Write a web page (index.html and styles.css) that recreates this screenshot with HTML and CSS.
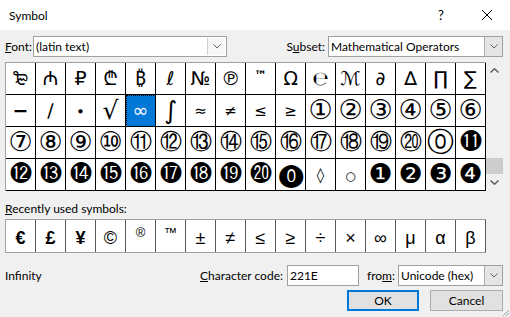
FILE: index.html
```html
<!DOCTYPE html>
<html>

<head>
  <meta charset="utf-8">
  <title>Symbol</title>
  <link rel="stylesheet" href="styles.css">
</head>

<body>
  <div class="titlebar">
    <span class="title">Symbol</span>
    <span class="title-btn help">?</span>
    <span class="title-btn close">
      <svg width="10" height="10" viewBox="0 0 10 10"><path d="M0 0L10 10M10 0L0 10" stroke="#000" stroke-width="1"/></svg>
    </span>
  </div>

  <div class="dialog">
    <div class="font-row">
      <span class="font-label"><u>F</u>ont:</span>
      <div class="combo font-combo">
        <span class="combo-text">(latin text)</span>
        <span class="combo-btn">
          <svg width="8" height="5" viewBox="0 0 8 5"><path d="M0.5 0.5L4 4L7.5 0.5" fill="none" stroke="#606060"/></svg>
        </span>
      </div>
      <span class="subset-label">S<u>u</u>bset:</span>
      <div class="combo subset-combo">
        <span class="combo-text">Mathematical Operators</span>
        <span class="combo-btn dark">
          <svg width="8" height="5" viewBox="0 0 8 5"><path d="M0.5 0.5L4 4L7.5 0.5" fill="none" stroke="#606060"/></svg>
        </span>
      </div>
    </div>

    <div class="chart">
      <div class="grid">
        <span class="cell">&#x20BB;</span>
        <span class="cell">&#x20BC;</span>
        <span class="cell">&#x20BD;</span>
        <span class="cell">&#x20BE;</span>
        <span class="cell">&#x20BF;</span>
        <span class="cell">&#x2113;</span>
        <span class="cell">&#x2116;</span>
        <span class="cell">&#x2117;</span>
        <span class="cell tm">&#x2122;</span>
        <span class="cell">&#x2126;</span>
        <span class="cell">&#x212E;</span>
        <span class="cell">&#x2133;</span>
        <span class="cell">&#x2202;</span>
        <span class="cell">&#x2206;</span>
        <span class="cell">&#x220F;</span>
        <span class="cell">&#x2211;</span>

        <span class="cell bold">&#x2212;</span>
        <span class="cell">&#x2215;</span>
        <span class="cell small">&#x2219;</span>
        <span class="cell big">&#x221A;</span>
        <span class="cell selected">&#x221E;</span>
        <span class="cell big">&#x222B;</span>
        <span class="cell small">&#x2248;</span>
        <span class="cell small">&#x2260;</span>
        <span class="cell small">&#x2264;</span>
        <span class="cell small">&#x2265;</span>
        <span class="cell circ-one">&#x2460;</span>
        <span class="cell circ-one">&#x2461;</span>
        <span class="cell circ-one">&#x2462;</span>
        <span class="cell circ-one">&#x2463;</span>
        <span class="cell circ-one">&#x2464;</span>
        <span class="cell circ-one">&#x2465;</span>

        <span class="cell circ-one">&#x2466;</span>
        <span class="cell circ-one">&#x2467;</span>
        <span class="cell circ-one">&#x2468;</span>
        <span class="cell circ-one">&#x2469;</span>
        <span class="cell circ">&#x246A;</span>
        <span class="cell circ">&#x246B;</span>
        <span class="cell circ">&#x246C;</span>
        <span class="cell circ">&#x246D;</span>
        <span class="cell circ">&#x246E;</span>
        <span class="cell circ">&#x246F;</span>
        <span class="cell circ">&#x2470;</span>
        <span class="cell circ">&#x2471;</span>
        <span class="cell circ">&#x2472;</span>
        <span class="cell circ">&#x2473;</span>
        <span class="cell circ-one">&#x24EA;</span>
        <span class="cell circ">&#x24EB;</span>

        <span class="cell circ">&#x24EC;</span>
        <span class="cell circ">&#x24ED;</span>
        <span class="cell circ">&#x24EE;</span>
        <span class="cell circ">&#x24EF;</span>
        <span class="cell circ">&#x24F0;</span>
        <span class="cell circ">&#x24F1;</span>
        <span class="cell circ">&#x24F2;</span>
        <span class="cell circ">&#x24F3;</span>
        <span class="cell circ">&#x24F4;</span>
        <span class="cell zero">&#x24FF;</span>
        <span class="cell small">&#x25CA;</span>
        <span class="cell tiny">&#x25CB;</span>
        <span class="cell dark">&#x2776;</span>
        <span class="cell dark">&#x2777;</span>
        <span class="cell dark">&#x2778;</span>
        <span class="cell dark">&#x2779;</span>
      </div>
      <div class="scrollbar">
        <span class="scroll-btn">
          <svg width="9" height="5" viewBox="0 0 9 5"><path d="M0.5 4.5L4.5 0.8L8.5 4.5" fill="none" stroke="#606060" stroke-width="1.5"/></svg>
        </span>
        <span class="scroll-track"></span>
        <span class="scroll-thumb"></span>
        <span class="scroll-btn">
          <svg width="9" height="5" viewBox="0 0 9 5"><path d="M0.5 0.5L4.5 4.2L8.5 0.5" fill="none" stroke="#606060" stroke-width="1.5"/></svg>
        </span>
      </div>
    </div>

    <div class="recent-label"><u>R</u>ecently used symbols:</div>
    <div class="recent">
      <span class="rcell bold">&#x20AC;</span>
      <span class="rcell bold">&#xA3;</span>
      <span class="rcell bold">&#xA5;</span>
      <span class="rcell">&#xA9;</span>
      <span class="rcell sup">&#xAE;</span>
      <span class="rcell sup">&#x2122;</span>
      <span class="rcell">&#xB1;</span>
      <span class="rcell">&#x2260;</span>
      <span class="rcell">&#x2264;</span>
      <span class="rcell">&#x2265;</span>
      <span class="rcell">&#xF7;</span>
      <span class="rcell">&#xD7;</span>
      <span class="rcell">&#x221E;</span>
      <span class="rcell">&#x3BC;</span>
      <span class="rcell">&#x3B1;</span>
      <span class="rcell">&#x3B2;</span>
    </div>

    <div class="info-row">
      <span class="char-name">Infinity</span>
      <span class="code-label"><u>C</u>haracter code:</span>
      <span class="code-input">221E</span>
      <span class="from-label">fro<u>m</u>:</span>
      <div class="combo from-combo">
        <span class="combo-text">Unicode (hex)</span>
        <span class="combo-btn dark">
          <svg width="8" height="5" viewBox="0 0 8 5"><path d="M0.5 0.5L4 4L7.5 0.5" fill="none" stroke="#606060"/></svg>
        </span>
      </div>
    </div>

    <div class="button-row">
      <button class="ok-btn">OK</button>
      <button class="cancel-btn">Cancel</button>
    </div>
  </div>

  <svg class="grip" width="10" height="10" viewBox="0 0 10 10">
    <path d="M9 3L3 9M9 6L6 9" stroke="#a0a0a0" stroke-width="1"/>
  </svg>
</body>

</html>
```

FILE: styles.css
```css
body {
  margin: 0;
  width: 510px;
  height: 317px;
  overflow: hidden;
  position: relative;
  background-color: #f0f0f0;
  font-family: Lato, "Liberation Sans", sans-serif;
  font-size: 12px;
  color: #000;
}

.titlebar {
  display: flex;
  align-items: center;
  height: 30px;
  background-color: #fff;
  padding-left: 9px;
}

.title {
  flex-grow: 1;
  font-size: 12px;
}

.title-btn {
  width: 46px;
  height: 30px;
  display: flex;
  align-items: center;
  justify-content: center;
}

.help {
  font-size: 13px;
}

.dialog {
  padding: 0 7px 0 5px;
}

.font-row {
  display: flex;
  align-items: center;
  height: 21px;
  margin-top: 6px;
}

.font-label {
  width: 28px;
}

.subset-label {
  margin-left: auto;
  margin-right: 3px;
}

.combo {
  display: flex;
  align-items: stretch;
  height: 21px;
  box-sizing: border-box;
  border: 1px solid #a0a0a0;
  background-color: #fff;
}

.combo-text {
  flex-grow: 1;
  display: flex;
  align-items: center;
  padding-left: 2px;
}

.combo-btn {
  width: 17px;
  display: flex;
  align-items: center;
  justify-content: center;
  border-left: 1px solid #d0d0d0;
  background-color: #f7f7f7;
  margin: 1px;
}

.combo-btn.dark {
  background-color: #e5e5e5;
  border-left: 1px solid #adadad;
  margin: 0;
}

.font-combo {
  width: 194px;
}

.subset-combo {
  width: 175px;
}

.chart {
  display: flex;
  margin-top: 5px;
}

.grid {
  display: grid;
  grid-template-columns: repeat(16, 30px);
  border-top: 1px solid #a0a0a0;
  border-left: 1px solid #a0a0a0;
  background-color: #fff;
}

.cell {
  box-sizing: border-box;
  height: 32px;
  overflow: hidden;
  border-right: 1px solid #000;
  border-bottom: 1px solid #000;
  display: flex;
  align-items: center;
  justify-content: center;
  font-family: "DejaVu Sans", "Noto Sans", sans-serif;
  font-size: 19px;
  line-height: 1.2;
}

.cell.bold {
  font-weight: bold;
}

.cell.small {
  font-size: 15px;
}

.cell.big {
  font-size: 25px;
}

.cell.circ {
  font-size: 22px;
}

.cell.circ-one {
  font-size: 27px;
}

.cell.zero {
  font-size: 24px;
}

.cell.dark {
  font-size: 27px;
}

.cell.tiny {
  font-size: 12px;
  padding-top: 3px;
}

.cell.tm {
  font-size: 13px;
  font-weight: bold;
  align-items: flex-start;
  padding-top: 5px;
}

.cell.selected {
  background-color: #0078d7;
  color: #fff;
  outline: 1px dotted #000;
  outline-offset: -1px;
}

.scrollbar {
  width: 17px;
  display: flex;
  flex-direction: column;
}

.scroll-btn {
  height: 17px;
  display: flex;
  align-items: center;
  justify-content: center;
}

.scroll-track {
  flex-grow: 1;
}

.scroll-thumb {
  height: 16px;
  background-color: #cdcdcd;
}

.recent-label {
  margin-top: 10px;
  height: 15px;
  line-height: 15px;
}

.recent {
  display: flex;
  width: 481px;
  box-sizing: border-box;
  margin-top: 3px;
  border: 1px solid #a0a0a0;
  border-right: none;
  background-color: #fff;
}

.rcell {
  box-sizing: border-box;
  width: 30px;
  height: 32px;
  border-right: 1px solid #5a5a5a;
  display: flex;
  align-items: center;
  justify-content: center;
  font-family: "Liberation Sans", sans-serif;
  font-size: 18px;
  padding-top: 4px;
}

.rcell.bold {
  font-weight: bold;
}

.rcell.sup {
  font-size: 13px;
  align-items: flex-start;
  padding-top: 5px;
}

.info-row {
  display: flex;
  align-items: center;
  height: 21px;
  margin-top: 12px;
}

.char-name {
  flex-grow: 1;
}

.code-label {
  margin-right: 4px;
}

.code-input {
  width: 72px;
  height: 21px;
  box-sizing: border-box;
  border: 1px solid #a0a0a0;
  background-color: #fff;
  padding-left: 2px;
  display: flex;
  align-items: center;
}

.from-label {
  margin-left: 8px;
  margin-right: 3px;
}

.from-combo {
  width: 105px;
}

.button-row {
  display: flex;
  justify-content: flex-end;
  margin-top: 4px;
  gap: 11px;
}

.button-row button {
  height: 21px;
  box-sizing: border-box;
  background-color: #e1e1e1;
  border: 1px solid #adadad;
  font-family: Lato, "Liberation Sans", sans-serif;
  font-size: 12px;
  padding: 0;
}

.ok-btn {
  width: 72px;
  border: 2px solid #0078d7 !important;
}

.cancel-btn {
  width: 73px;
}

.grip {
  position: absolute;
  right: 0;
  bottom: 0;
}
```
